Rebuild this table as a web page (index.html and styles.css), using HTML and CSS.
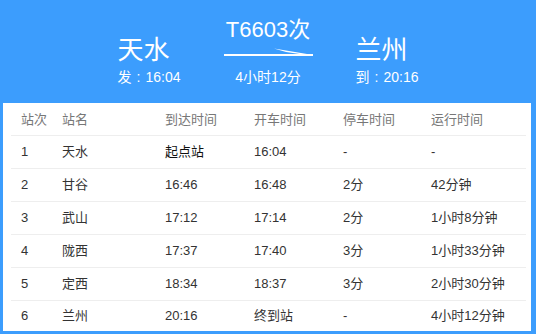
FILE: index.html
```html
<!DOCTYPE html>
<html lang="zh-CN">
<head>
<meta charset="utf-8">
<title>T6603次</title>
<link rel="stylesheet" href="styles.css">
</head>
<body>
<div class="page">
  <header class="hero">
    <div class="station">
      <div class="station-name">天水</div>
      <div class="station-time">发<span class="colon">:</span>16:04</div>
    </div>
    <div class="train">
      <div class="train-no">T6603次</div>
      <svg class="arrow" width="89" height="14" viewBox="0 0 89 14">
        <rect x="0" y="11" width="89" height="2" fill="#fff"/>
        <polygon points="50,5.5 89,12 89,13 62,9" fill="#fff"/>
      </svg>
      <div class="train-dur">4小时12分</div>
    </div>
    <div class="station">
      <div class="station-name">兰州</div>
      <div class="station-time">到<span class="colon">:</span>20:16</div>
    </div>
  </header>
  <section class="panel">
    <div class="row head">
      <span>站次</span><span>站名</span><span>到达时间</span><span>开车时间</span><span>停车时间</span><span>运行时间</span>
    </div>
    <div class="row">
      <span>1</span><span>天水</span><span class="strong">起点站</span><span>16:04</span><span>-</span><span>-</span>
    </div>
    <div class="row">
      <span>2</span><span>甘谷</span><span>16:46</span><span>16:48</span><span>2分</span><span>42分钟</span>
    </div>
    <div class="row">
      <span>3</span><span>武山</span><span>17:12</span><span>17:14</span><span>2分</span><span>1小时8分钟</span>
    </div>
    <div class="row">
      <span>4</span><span>陇西</span><span>17:37</span><span>17:40</span><span>3分</span><span>1小时33分钟</span>
    </div>
    <div class="row">
      <span>5</span><span>定西</span><span>18:34</span><span>18:37</span><span>3分</span><span>2小时30分钟</span>
    </div>
    <div class="row last">
      <span>6</span><span>兰州</span><span>20:16</span><span>终到站</span><span>-</span><span>4小时12分钟</span>
    </div>
  </section>
</div>
</body>
</html>
```

FILE: styles.css
```css
html, body {
  margin: 0;
  padding: 0;
}
body {
  background: #3c9dfd;
  font-family: "Liberation Sans", "Noto Sans CJK SC", sans-serif;
  width: 536px;
  height: 334px;
  overflow: hidden;
}
.page {
  display: flex;
  flex-direction: column;
  height: 334px;
  box-sizing: border-box;
  padding: 0 5px 3px 3px;
}
.hero {
  height: 103px;
  display: flex;
  justify-content: center;
  align-items: flex-start;
  gap: 43px;
  color: #fff;
  padding-left: 2px;
}
.station {
  padding-top: 35px;
  display: flex;
  flex-direction: column;
}
.station-name {
  font-size: 26px;
  line-height: 30px;
}
.station-time {
  font-size: 14px;
  line-height: 18px;
  margin-top: 3px;
  white-space: nowrap;
}
.colon {
  display: inline-block;
  width: 14px;
  text-align: center;
}
.train {
  padding-top: 17px;
  display: flex;
  flex-direction: column;
  align-items: center;
  width: 89px;
}
.train-no {
  font-size: 22px;
  line-height: 26px;
  white-space: nowrap;
}
.arrow {
  display: block;
}
.train-dur {
  font-size: 14px;
  line-height: 18px;
  margin-top: 11px;
  white-space: nowrap;
}
.panel {
  flex: 1;
  background: #fff;
  padding: 0 5px 0 8px;
  overflow: hidden;
}
.row {
  display: grid;
  grid-template-columns: 41px 103px 89px 89px 88px 1fr;
  padding-left: 10px;
  height: 32px;
  align-items: center;
  border-bottom: 1px solid #eeeeee;
  font-size: 13px;
  line-height: 16px;
  color: #333;
  white-space: nowrap;
}
.row.head {
  color: #777;
  padding-top: 1px;
  height: 31px;
}
.row.last {
  border-bottom: none;
  height: 30px;
}
.strong {
  color: #111;
}
```
